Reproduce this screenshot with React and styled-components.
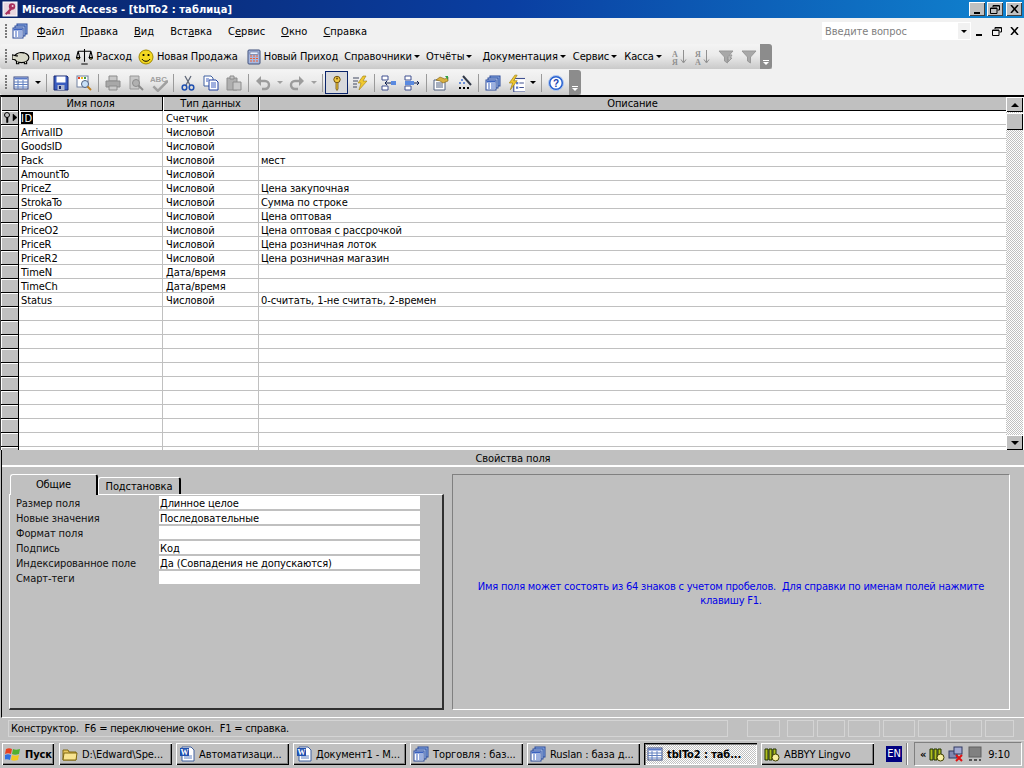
import React from 'react';
import styled, { createGlobalStyle } from 'styled-components';

const GlobalStyle = createGlobalStyle`
  html, body {
    margin: 0;
    padding: 0;
    background: #c0c0c0;
  }
  * {
    box-sizing: border-box;
  }
  body {
    font-family: "DejaVu Sans Condensed", "DejaVu Sans", "Liberation Sans", sans-serif;
    font-stretch: condensed;
    font-size: 11px;
    letter-spacing: -0.1px;
    color: #000;
  }
`;

const Svg = ({ size = 16, children }) => (
  <svg width={size} height={size} viewBox="0 0 16 16" style={{ flex: 'none', display: 'block' }}>
    {children}
  </svg>
);

const AccessLogo = () => (
  <Svg>
    <rect x="1" y="1" width="14" height="14" fill="#e8d8e0" stroke="#fff" />
    <circle cx="10" cy="5.5" r="3.2" fill="#a8305c" />
    <path d="M8 7.5 3 12.5 4.5 14 6 12.5 7 13.5 8.5 12 7.5 11 10 8.5z" fill="#a8305c" />
    <circle cx="10.6" cy="5" r="1" fill="#f0d0e0" />
  </Svg>
);

const DbIcon = () => (
  <Svg>
    <rect x="5" y="1" width="10" height="10" fill="#8fb0e8" stroke="#2a4a9a" />
    <rect x="3" y="3" width="10" height="10" fill="#b8cdf0" stroke="#2a4a9a" />
    <rect x="1" y="5" width="10" height="10" fill="#fff" stroke="#2a4a9a" />
    <path d="M1.5 5.5h9v2h-9z" fill="#3a62c0" />
    <path d="M3 9h2M6 9h4M3 11h2M6 11h4M3 13h2M6 13h4" stroke="#3a62c0" />
  </Svg>
);

// snout points left, as in the reference
const Pig = () => (
  <Svg size={18}>
    <g transform="matrix(-1 0 0 1 17 0)">
      <ellipse cx="8.5" cy="8.5" rx="6.5" ry="4.5" fill="#d8d8c8" stroke="#000" />
      <path d="M13 7l4-1v4l-3 0.5M4 12v2h2v-1.5M11 12.5V14h2v-2.5M6 4.5l4-0.5" fill="#d8d8c8" stroke="#000" />
      <circle cx="12.5" cy="7" r="0.7" />
    </g>
  </Svg>
);

const Scales = () => (
  <Svg size={17}>
    <path d="M8 1v12M2 3h12M5 15h6" stroke="#000" fill="none" />
    <path d="M2 3 0.5 9h3zM14 3l-1.5 6h3z" stroke="#000" fill="none" />
    <path d="M0.5 9a1.5 1.5 0 0 0 3 0zM12.5 9a1.5 1.5 0 0 0 3 0z" fill="#e8d050" stroke="#000" />
  </Svg>
);

const Smile = () => (
  <Svg>
    <circle cx="8" cy="8" r="7" fill="#f4d820" stroke="#a08800" />
    <circle cx="5.5" cy="6" r="1.1" fill="#000" />
    <circle cx="10.5" cy="6" r="1.1" fill="#000" />
    <path d="M4 10c1.5 3 6.500 3 8 0" fill="none" stroke="#000" />
  </Svg>
);

const Calc = () => (
  <Svg>
    <rect x="2" y="1" width="12" height="14" rx="1" fill="#a8b8e0" stroke="#40507a" />
    <rect x="4" y="3" width="8" height="2.500" fill="#e8f0ff" stroke="#40507a" strokeWidth="0.5" />
    <path d="M4 7h2M7 7h2M10 7h2M4 9.500h2M7 9.500h2M10 9.500h2M4 12h2M7 12h2M10 12h2" stroke="#f06030" strokeWidth="1.2" />
  </Svg>
);

const SortIcon = ({ up }) => (
  <Svg>
    <text x="0" y="7.500" fontSize="8" fontWeight="bold" fill="#909090" fontFamily="Liberation Serif, serif">{up ? 'А' : 'Я'}</text>
    <text x="0" y="15.500" fontSize="8" fontWeight="bold" fill="#909090" fontFamily="Liberation Serif, serif">{up ? 'Я' : 'А'}</text>
    <path d="M11.500 1v12M9 10.500 11.500 14l2.500-3.500" fill="none" stroke="#909090" />
  </Svg>
);

const Funnel = ({ bolt }) => (
  <Svg>
    <path d="M1 2h14L9.500 8v6l-3-2V8z" fill="#a8a8a8" stroke="#989898" />
    {bolt && <path d="M12 6l-3 4h2l-2 4 5-5h-2l2-3z" fill="#c0c0c0" stroke="#989898" />}
  </Svg>
);

const GridIcon = () => (
  <Svg>
    <rect x="1" y="2" width="14" height="12" fill="#fff" stroke="#3a4a80" />
    <path d="M1.500 2.500h13v2h-13z" fill="#5a7ac8" />
    <path d="M1 7h14M1 9.500h14M1 12h14M5 5v9M10 5v9" stroke="#6080c0" />
  </Svg>
);

const Disk = () => (
  <Svg>
    <path d="M1 1h13l1 1v13H1z" fill="#3a5cc0" stroke="#1a2a70" />
    <rect x="3.500" y="1.500" width="9" height="6" fill="#fff" />
    <rect x="4.500" y="10" width="7" height="5" fill="#b0b8d0" />
    <rect x="6" y="11" width="2" height="3" fill="#1a2a70" />
  </Svg>
);

const PreviewTable = () => (
  <Svg>
    <rect x="1" y="1" width="11" height="11" fill="#fff" stroke="#7080a0" />
    <path d="M2 2h2v2H2z" fill="#e84020" />
    <path d="M5 2h2v2H5z" fill="#f0c020" />
    <path d="M8 2h2v2H8z" fill="#40a040" />
    <circle cx="9" cy="9" r="3.500" fill="#c8e0f8" stroke="#506080" />
    <path d="M11.500 11.500 15 15" stroke="#c08020" strokeWidth="2" />
  </Svg>
);

const PrintOff = () => (
  <Svg>
    <path d="M4 1h8v5H4z" fill="#c8c8c8" stroke="#8c8c8c" />
    <path d="M1 6h14v6H1z" fill="#a8a8a8" stroke="#8c8c8c" />
    <path d="M4 11h8v4H4z" fill="#c8c8c8" stroke="#8c8c8c" />
  </Svg>
);

const PreviewOff = () => (
  <Svg>
    <path d="M2 1h9v13H2z" fill="#c8c8c8" stroke="#989898" />
    <circle cx="8" cy="8" r="3.500" fill="#b0b0b0" stroke="#8c8c8c" />
    <path d="M10.500 10.500 15 15" stroke="#8c8c8c" strokeWidth="2" />
  </Svg>
);

const SpellOff = () => (
  <Svg size={18}>
    <text x="0" y="7" fontSize="7" fontWeight="bold" fill="#a0a0a0" fontFamily="Liberation Sans, sans-serif">ABC</text>
    <path d="M3 11l4 4 9-9" fill="none" stroke="#a0a0a0" strokeWidth="2.200" />
  </Svg>
);

const Cut = () => (
  <Svg>
    <path d="M5 1l5 9M11 1 6 10" stroke="#606878" strokeWidth="1.300" />
    <ellipse cx="4.500" cy="12.500" rx="2.300" ry="2.500" fill="none" stroke="#2050b0" strokeWidth="1.500" />
    <ellipse cx="11.500" cy="12.500" rx="2.300" ry="2.500" fill="none" stroke="#2050b0" strokeWidth="1.500" />
  </Svg>
);

const Copy = () => (
  <Svg>
    <path d="M1 1h7l2 2v8H1z" fill="#fff" stroke="#4060a0" />
    <path d="M6 5h7l2 2v8H6z" fill="#fff" stroke="#2040a0" />
    <path d="M8 8h5M8 10h5M8 12h5M3 4h3M3 6h2" stroke="#4060c0" />
  </Svg>
);

const PasteOff = () => (
  <Svg>
    <path d="M1 3h10v12H1z" fill="#b0b0b0" stroke="#8c8c8c" />
    <path d="M4 1h4v3H4z" fill="#c8c8c8" stroke="#8c8c8c" />
    <path d="M7 7h8v8H7z" fill="#c8c8c8" stroke="#8c8c8c" />
  </Svg>
);

const Undo = ({ flip }) => (
  <Svg>
    <g transform={flip ? 'matrix(-1 0 0 1 16 0)' : undefined}>
      <path d="M5 6h5a3.500 3.500 0 0 1 0 8H7" fill="none" stroke="#9c9c9c" strokeWidth="2.400" />
      <path d="M6 1v10L1 6z" fill="#9c9c9c" />
    </g>
  </Svg>
);

const Key = () => (
  <Svg>
    <circle cx="8" cy="4.500" r="3.200" fill="#f0c840" stroke="#705010" />
    <circle cx="8" cy="3.500" r="1" fill="#705010" />
    <path d="M7 7.500h2V14l-1 1.500L7 14z" fill="#f0c840" stroke="#705010" strokeWidth="0.800" />
  </Svg>
);

const Bolt = () => (
  <Svg>
    <path d="M1 3h6M1 6h5M1 9h4M1 12h4" stroke="#404860" />
    <path d="M11 1 6 8h3l-2 7 8-9h-4l3-5z" fill="#f0c830" stroke="#a08010" strokeWidth="0.600" />
  </Svg>
);

const RowsIcon = ({ del }) => (
  <Svg>
    <path d="M1 1h6v4H1zM1 11h6v4H1z" fill="#fff" stroke="#405090" />
    {del ? (
      <>
        <path d="M1 6h9v4H1z" fill="#5a8ae0" />
        <path d="M10 8h5M13 6l2 2-2 2" fill="none" stroke="#102050" />
      </>
    ) : (
      <>
        <path d="M10 6h5v4h-5z" fill="#5a8ae0" />
        <path d="M10 8H4M6 6 4 8l2 2" fill="none" stroke="#102050" />
      </>
    )}
  </Svg>
);

const PropsIcon = () => (
  <Svg>
    <path d="M1 5h11v10H1z" fill="#fff" stroke="#506080" />
    <path d="M3 8h7M3 10h7M3 12h7" stroke="#506080" />
    <path d="M3 5l4-3 5 2 3-2v4l-5 2-3-2z" fill="#d8b040" stroke="#806010" strokeWidth="0.600" />
    <path d="M12 1h3v4z" fill="#30a040" />
  </Svg>
);

const BuildIcon = () => (
  <Svg>
    <path d="M7 1 15 10" stroke="#303848" strokeWidth="2" />
    <path d="M5 5h2M3 8h2M7 8h2" stroke="#4070d0" strokeWidth="1.400" />
    <path d="M3 13h2M7 13h2M11 13h2" stroke="#000" strokeWidth="2" />
  </Svg>
);

const NewObject = () => (
  <Svg size={18}>
    <rect x="6" y="4" width="11" height="12" fill="#fff" stroke="#405090" />
    <path d="M8 7h2v2H8zM8 11h2v2H8z" fill="#5a7ac8" />
    <path d="M11 8h4M11 12h4" stroke="#405090" />
    <path d="M7 1 2 8h3l-2 6 6-8H6l3-5z" fill="#f0c830" stroke="#a08010" strokeWidth="0.600" />
  </Svg>
);

const Help = () => (
  <Svg>
    <circle cx="8" cy="8" r="7.500" fill="#2a62d0" stroke="#b0c8f0" />
    <circle cx="8" cy="8" r="5.500" fill="#fff" />
    <text x="8" y="11.500" fontSize="10" fontWeight="bold" fill="#1840b0" textAnchor="middle" fontFamily="Liberation Sans, sans-serif">?</text>
  </Svg>
);

const WinFlag = () => (
  <Svg>
    <path d="M1 3c2-1 4-1 6 0l-1 5c-2-1-4-1-6 0z" fill="#e84020" />
    <path d="M8 3c2 1 4 1 7 0l-1 5c-3 1-5 1-7 0z" fill="#50b030" />
    <path d="M0 9c2-1 4-1 6 0l-1 5c-2-1-4-1-6 0z" fill="#3070e0" />
    <path d="M7 9c2 1 4 1 7 0l-1 5c-3 1-5 1-7 0z" fill="#f0c820" />
  </Svg>
);

const Folder = () => (
  <Svg>
    <path d="M1 4h5l1 2h7v8H1z" fill="#e8c860" stroke="#806810" />
    <path d="M2 7h13l-1 7H1z" fill="#f8e490" stroke="#806810" />
  </Svg>
);

const WordDoc = () => (
  <Svg>
    <path d="M3 1h9l3 3v11H3z" fill="#fff" stroke="#4060a0" />
    <path d="M5 10h8M5 12h8" stroke="#6080c0" />
    <rect x="1" y="2" width="9" height="8" fill="#2050b0" />
    <text x="5.500" y="9" fontSize="8" fontWeight="bold" fill="#fff" textAnchor="middle" fontFamily="Liberation Serif, serif">W</text>
  </Svg>
);

const Lingvo = () => (
  <Svg>
    <path d="M1 3h3v11H1zM5 3h3v11H5zM9 3h3v8H9z" fill="#b0c020" stroke="#203000" />
    <circle cx="11.500" cy="11.500" r="3.500" fill="#f8f0a0" stroke="#404000" />
  </Svg>
);

const Network = () => (
  <Svg>
    <rect x="1" y="5" width="8" height="7" fill="#8088b0" stroke="#303860" />
    <rect x="6" y="1" width="8" height="7" fill="#a0a8d0" stroke="#303860" />
    <path d="M8 9l6 6M14 9l-6 6" stroke="#e01010" strokeWidth="2" />
  </Svg>
);

const Monitor = () => (
  <Svg>
    <rect x="2" y="1" width="12" height="10" fill="#808080" stroke="#606060" />
    <path d="M2 14h3M7 14h3M12 14h2" stroke="#303030" strokeWidth="1.500" />
  </Svg>
);

const Page = styled.div`
  width: 1024px;
  height: 768px;
  display: flex;
  flex-direction: column;
  overflow: hidden;
  background: #c0c0c0;
`;

const TitleBar = styled.div`
  height: 18px;
  flex: none;
  display: flex;
  align-items: center;
  padding: 0 2px;
  gap: 2px;
  background: linear-gradient(90deg, #0a246a 0%, #0a3fa2 50%, #1084d0 100%);
  color: #fff;
`;

const TitleText = styled.span`
  flex: 1;
  padding-left: 2px;
  font-weight: bold;
  font-size: 11px;
  letter-spacing: 0.1px;
  white-space: nowrap;
`;

const CaptionButton = styled.div`
  width: 16px;
  height: 14px;
  margin-left: ${(p) => p.$gap || 0}px;
  display: flex;
  align-items: center;
  justify-content: center;
  background: #c0c0c0;
  box-shadow: inset 1px 1px 0 #fff, inset -1px -1px 0 #404040;
`;

const Dock = styled.div`
  flex: none;
  height: 77px;
  background: #f1f1f1;
  display: flex;
  flex-direction: column;
`;

const MenuRow = styled.div`
  height: 26px;
  display: flex;
  align-items: center;
  padding-left: 5px;
  flex: none;
`;

const Grip = styled.div`
  width: 3px;
  height: 15px;
  margin-right: ${(p) => p.$after}px;
  flex: none;
  background-image: radial-gradient(circle at 1px 1px, #7a7a7a 1px, transparent 1.2px);
  background-size: 3px 3px;
`;

const MenuList = styled.div`
  display: flex;
  gap: 16px;
  margin-left: 9px;
  flex: 1;
  font-size: 11px;
  letter-spacing: 0;

  u {
    text-underline-offset: 1px;
  }
`;

const AskBox = styled.div`
  width: 149px;
  height: 18px;
  background: #fff;
  display: flex;
  align-items: center;
  justify-content: space-between;
  padding-left: 3px;
  color: #808080;
`;

const AskArrow = styled.div`
  width: 12px;
  height: 16px;
  background: #f1f1f1;
  display: flex;
  align-items: center;
  justify-content: center;
  margin-right: 1px;
`;

const DocButtons = styled.div`
  width: 53px;
  display: flex;
  justify-content: space-around;
  padding-right: 1px;
`;

const Toolbar = styled.div`
  height: 25px;
  width: ${(p) => p.$width}px;
  margin-bottom: 1px;
  flex: none;
  display: flex;
  align-items: center;
  padding-left: 5px;
  border-radius: 3px 0 0 3px;
  background: linear-gradient(180deg, #f4f4f4 0%, #ebebeb 45%, #c9c9c9 100%);
`;

const ToolbarEnd = styled.div`
  margin-left: auto;
  width: 12px;
  height: 25px;
  flex: none;
  border-radius: 0 3px 3px 0;
  background: #8c8c8c;
  display: flex;
  flex-direction: column;
  align-items: center;
  justify-content: flex-end;
  padding-bottom: 4px;
  gap: 1px;

  &::before {
    content: '';
    width: 6px;
    height: 1px;
    background: #fff;
  }
  &::after {
    content: '';
    width: 0;
    height: 0;
    border: 3px solid transparent;
    border-top-color: #fff;
    border-bottom: 0;
  }
`;

const TextTool = styled.div`
  display: flex;
  align-items: center;
  flex: none;
  gap: ${(p) => p.$gap ?? 2}px;
  margin-left: ${(p) => p.$left || 0}px;
  white-space: nowrap;
`;

const Caret = styled.i`
  display: block;
  flex: none;
  width: 0;
  height: 0;
  border: 3px solid transparent;
  border-top: 3px solid ${(p) => p.$color || '#000'};
  border-bottom: 0;
`;

const ToolButton = styled.div`
  width: 23px;
  height: 23px;
  flex: none;
  display: flex;
  align-items: center;
  justify-content: center;
  ${(p) => p.$active && 'background: #d8d9dc; border: 1px solid #0a246a;'}
`;

const ToolCaret = styled.div`
  width: 11px;
  height: 23px;
  flex: none;
  display: flex;
  align-items: center;
  justify-content: center;
`;

const ToolSep = styled.div`
  width: 6px;
  height: 18px;
  flex: none;
  display: flex;
  justify-content: center;

  &::after {
    content: '';
    width: 1px;
    background: #9a9a9a;
  }
`;

const Table = styled.div`
  flex: none;
  height: 355px;
  display: flex;
  border-top: 2px solid #000;
  border-left: 1px solid #404040;
  background: #fff;
`;

const TableBody = styled.div`
  flex: 1;
  min-width: 0;
  overflow: hidden;
`;

const Row = styled.div`
  display: grid;
  grid-template-columns: 18px 144px 96px 1fr;
  height: 14px;
`;

const HeaderRow = styled(Row)`
  background: #c0c0c0;
  border-bottom: 1px solid #000;
`;

const HeadCell = styled.div`
  text-align: center;
  line-height: 14px;
  border-right: 1px solid #000;
  box-shadow: inset 1px 0 0 #fff;

  &:last-child {
    border-right: 0;
  }
`;

const Selector = styled.div`
  background: #c0c0c0;
  border-right: 1px solid #000;
  border-bottom: 1px solid #000;
  box-shadow: inset 1px 1px 0 #fff;
  display: flex;
  align-items: center;
  padding-left: 2px;
`;

const Cell = styled.div`
  border-right: 1px solid #c0c0c0;
  border-bottom: 1px solid #c0c0c0;
  padding-left: ${(p) => p.$pad ?? 2}px;
  line-height: 15px;
  white-space: nowrap;
  overflow: hidden;

  &:last-child {
    border-right: 0;
  }
`;

const Picked = styled.span`
  background: #000;
  color: #fff;
  letter-spacing: 0.5px;
`;

const ScrollBar = styled.div`
  width: 17px;
  margin-right: 1px;
  flex: none;
  display: flex;
  flex-direction: column;
  background-color: #fff;
  background-image: conic-gradient(#c0c0c0 25%, #fff 0 50%, #c0c0c0 0 75%, #fff 0);
  background-size: 2px 2px;
`;

const ScrollButton = styled.div`
  height: ${(p) => p.$h}px;
  flex: none;
  display: flex;
  align-items: center;
  justify-content: center;
  background: #c0c0c0;
  box-shadow: inset 1px 1px 0 #fff, inset -1px -1px 0 #000;
  margin-top: ${(p) => (p.$end ? 'auto' : `${p.$top || 0}px`)};
`;

const Arrow = styled.i`
  display: block;
  width: 0;
  height: 0;
  border-left: 4px solid transparent;
  border-right: 4px solid transparent;
  border-${(p) => (p.$up ? 'bottom' : 'top')}: 4px solid #000;
`;

const PropsPane = styled.div`
  flex: none;
  height: 268px;
  margin-left: 1px;
  border-left: 1px solid #000;
  border-bottom: 1px solid #fff;
  display: flex;
  flex-direction: column;
`;

const PropsCaption = styled.div`
  height: 17px;
  flex: none;
  text-align: center;
  line-height: 17px;
  border-bottom: 2px solid;
  border-image: linear-gradient(#808080 50%, #fff 50%) 2;
`;

const PropsBody = styled.div`
  flex: 1;
  display: flex;
  gap: 8px;
  padding: 7px 14px 7px 7px;
`;

const TabColumn = styled.div`
  width: 435px;
  display: flex;
  flex-direction: column;
`;

const Tabs = styled.div`
  display: flex;
  align-items: flex-end;
  height: 20px;
  padding-left: 1px;
  flex: none;
`;

const Tab = styled.div`
  width: ${(p) => p.$w}px;
  height: ${(p) => (p.$active ? 21 : 17)}px;
  margin-bottom: ${(p) => (p.$active ? -1 : 0)}px;
  position: relative;
  background: #c0c0c0;
  border-top: 1px solid #fff;
  border-left: 1px solid #fff;
  border-right: 2px solid #000;
  border-radius: 3px 3px 0 0;
  text-align: center;
  line-height: ${(p) => (p.$active ? 19 : 18)}px;
`;

const TabPanel = styled.div`
  flex: 1;
  border-top: 1px solid #fff;
  border-left: 1px solid #fff;
  border-right: 2px solid #303030;
  border-bottom: 2px solid #303030;
  padding: 1px 22px 0 6px;
  display: grid;
  grid-template-columns: 143px 1fr;
  grid-auto-rows: 13px;
  row-gap: 2px;
`;

const FieldLabel = styled.div`
  line-height: 15px;
  color: #101010;
`;

const FieldValue = styled.div`
  background: #fff;
  line-height: 15px;
  padding-left: 1px;
  white-space: nowrap;
`;

const HintPanel = styled.div`
  flex: 1;
  border: 1px solid;
  border-color: #808080 #fff #fff #808080;
  display: flex;
  align-items: center;
  justify-content: center;
  padding: 4px 10px 0;
  text-align: center;
  white-space: pre-wrap;
  letter-spacing: -0.2px;
  color: #0000e8;
  line-height: 14px;
`;

const StatusBar = styled.div`
  flex: none;
  height: 22px;
  display: flex;
  gap: 3px;
  padding: 2px 8px 3px 8px;
`;

const StatusCell = styled.div`
  width: ${(p) => p.$w}px;
  margin-right: ${(p) => p.$after || 0}px;
  border: 1px solid #d4d4d4;
  padding-left: 2px;
  line-height: 15px;
  white-space: pre;
  letter-spacing: -0.2px;
`;

const TaskBar = styled.div`
  flex: 1;
  display: flex;
  align-items: center;
  padding: 1px 2px 3px 2px;
  gap: 4px;
  border-top: 1px solid #d8d8d8;
`;

const TaskButton = styled.div`
  width: ${(p) => p.$w || 113}px;
  height: 22px;
  flex: none;
  margin-right: ${(p) => p.$after || 0}px;
  display: flex;
  align-items: center;
  gap: 4px;
  padding-left: 3px;
  white-space: nowrap;
  overflow: hidden;
  background-color: #c0c0c0;
  box-shadow: inset 1px 1px 0 #fff, inset -1px -1px 0 #000, inset -2px -2px 0 #808080;
  ${(p) =>
    p.$active &&
    `
    font-weight: bold;
    background-color: #fff;
    background-image: conic-gradient(#c0c0c0 25%, #fff 0 50%, #c0c0c0 0 75%, #fff 0);
    background-size: 2px 2px;
    box-shadow: inset 1px 1px 0 #000, inset 2px 2px 0 #808080, inset -1px -1px 0 #fff;
  `}
`;

const StartLabel = styled.b`
  font-size: 11px;
  font-family: "DejaVu Sans", sans-serif;
`;

const LangBadge = styled.div`
  width: 16px;
  height: 16px;
  margin-left: 8px;
  flex: none;
  background: #000080;
  color: #fff;
  font-size: 11px;
  line-height: 16px;
  text-align: center;
`;

const TrayDivider = styled.div`
  width: 2px;
  height: 22px;
  flex: none;
  border-left: 1px solid #808080;
  border-right: 1px solid #fff;
`;

const Tray = styled.div`
  flex: 1;
  height: 24px;
  margin-left: 2px;
  display: flex;
  align-items: center;
  gap: 3px;
  padding-left: 5px;
  border: 1px solid;
  border-color: #808080 #fff #fff #808080;
`;

const Clock = styled.span`
  margin-left: auto;
  margin-right: 11px;
`;

const rows = [
  ['ArrivalID', 'Числовой', ''],
  ['GoodsID', 'Числовой', ''],
  ['Pack', 'Числовой', 'мест'],
  ['AmountTo', 'Числовой', ''],
  ['PriceZ', 'Числовой', 'Цена закупочная'],
  ['StrokaTo', 'Числовой', 'Сумма по строке'],
  ['PriceO', 'Числовой', 'Цена оптовая'],
  ['PriceO2', 'Числовой', 'Цена оптовая с рассрочкой'],
  ['PriceR', 'Числовой', 'Цена розничная лоток'],
  ['PriceR2', 'Числовой', 'Цена розничная магазин'],
  ['TimeN', 'Дата/время', ''],
  ['TimeCh', 'Дата/время', ''],
  ['Status', 'Числовой', '0-считать, 1-не считать, 2-времен'],
  ...Array.from({ length: 11 }, () => ['', '', '']),
];

const fields = [
  ['Размер поля', 'Длинное целое'],
  ['Новые значения', 'Последовательные'],
  ['Формат поля', ''],
  ['Подпись', 'Код'],
  ['Индексированное поле', 'Да (Совпадения не допускаются)'],
  ['Смарт-теги', ''],
];

const CloseGlyph = () => (
  <svg width="9" height="8" viewBox="0 0 9 8">
    <path d="M1 0l7 8M8 0 1 8" stroke="#000" strokeWidth="1.500" fill="none" />
  </svg>
);

const MinGlyph = () => (
  <svg width="9" height="9" viewBox="0 0 9 9">
    <path d="M1 7h6v2H1z" fill="#000" />
  </svg>
);

const RestoreGlyph = () => (
  <svg width="10" height="9" viewBox="0 0 10 9">
    <path d="M3 2V0.500h6.500V5H7.500M0.500 3h6.500v5.500H0.500z" fill="none" stroke="#000" />
    <path d="M3 1h6M0.500 3.500h6.500" stroke="#000" />
  </svg>
);

const App = () => (
  <Page>
    <GlobalStyle />
    <TitleBar>
      <AccessLogo />
      <TitleText>Microsoft Access - [tblTo2 : таблица]</TitleText>
      <CaptionButton><MinGlyph /></CaptionButton>
      <CaptionButton><RestoreGlyph /></CaptionButton>
      <CaptionButton $gap={1}><CloseGlyph /></CaptionButton>
    </TitleBar>

    <Dock>
      <MenuRow>
        <Grip $after={4} />
        <DbIcon />
        <MenuList>
          <span><u>Ф</u>айл</span>
          <span><u>П</u>равка</span>
          <span><u>В</u>ид</span>
          <span>Вст<u>а</u>вка</span>
          <span>С<u>е</u>рвис</span>
          <span><u>О</u>кно</span>
          <span><u>С</u>правка</span>
        </MenuList>
        <AskBox>
          Введите вопрос
          <AskArrow><Caret /></AskArrow>
        </AskBox>
        <DocButtons>
          <MinGlyph />
          <RestoreGlyph />
          <CloseGlyph />
        </DocButtons>
      </MenuRow>

      <Toolbar $width={772}>
        <Grip $after={4} />
        <TextTool><Pig />Приход</TextTool>
        <TextTool $left={6} $gap={3}><Scales />Расход</TextTool>
        <TextTool $left={6} $gap={3}><Smile />Новая Продажа</TextTool>
        <TextTool $left={8}><Calc />Новый Приход</TextTool>
        <TextTool $left={6}>Справочники<Caret /></TextTool>
        <TextTool $left={6}>Отчёты<Caret /></TextTool>
        <TextTool $left={10}>Документация<Caret /></TextTool>
        <TextTool $left={7}>Сервис<Caret /></TextTool>
        <TextTool $left={7}>Касса<Caret /></TextTool>
        <TextTool $left={10} $gap={7}>
          <SortIcon up />
          <SortIcon />
          <Funnel bolt />
          <Funnel />
        </TextTool>
        <ToolbarEnd />
      </Toolbar>

      <Toolbar $width={581}>
        <Grip $after={1} />
        <ToolButton><GridIcon /></ToolButton>
        <ToolCaret><Caret /></ToolCaret>
        <ToolSep />
        <ToolButton><Disk /></ToolButton>
        <ToolButton><PreviewTable /></ToolButton>
        <ToolSep />
        <ToolButton><PrintOff /></ToolButton>
        <ToolButton><PreviewOff /></ToolButton>
        <ToolButton><SpellOff /></ToolButton>
        <ToolSep />
        <ToolButton><Cut /></ToolButton>
        <ToolButton><Copy /></ToolButton>
        <ToolButton><PasteOff /></ToolButton>
        <ToolSep />
        <ToolButton><Undo /></ToolButton>
        <ToolCaret><Caret $color="#a0a0a0" /></ToolCaret>
        <ToolButton><Undo flip /></ToolButton>
        <ToolCaret><Caret $color="#a0a0a0" /></ToolCaret>
        <ToolSep />
        <ToolButton $active><Key /></ToolButton>
        <ToolButton><Bolt /></ToolButton>
        <ToolSep />
        <ToolButton><RowsIcon /></ToolButton>
        <ToolButton><RowsIcon del /></ToolButton>
        <ToolSep />
        <ToolButton><PropsIcon /></ToolButton>
        <ToolButton><BuildIcon /></ToolButton>
        <ToolSep />
        <ToolButton><DbIcon /></ToolButton>
        <ToolButton><NewObject /></ToolButton>
        <ToolCaret><Caret /></ToolCaret>
        <ToolSep />
        <ToolButton><Help /></ToolButton>
        <ToolbarEnd />
      </Toolbar>
    </Dock>

    <Table>
      <TableBody>
        <HeaderRow>
          <HeadCell />
          <HeadCell>Имя поля</HeadCell>
          <HeadCell>Тип данных</HeadCell>
          <HeadCell>Описание</HeadCell>
        </HeaderRow>
        <Row>
          <Selector>
            <svg width="14" height="11" viewBox="0 0 14 11">
              <circle cx="4" cy="3" r="2.500" fill="none" stroke="#000" />
              <path d="M3.500 5.500v5h1.500v-5M10 2v7l4-3.500z" fill="#000" stroke="#000" strokeWidth="0.500" />
            </svg>
          </Selector>
          <Cell><Picked>ID</Picked></Cell>
          <Cell $pad={3}>Счетчик</Cell>
          <Cell />
        </Row>
        {rows.map(([name, type, note], i) => (
          <Row key={i}>
            <Selector />
            <Cell>{name}</Cell>
            <Cell $pad={3}>{type}</Cell>
            <Cell>{note}</Cell>
          </Row>
        ))}
      </TableBody>
      <ScrollBar>
        <ScrollButton $h={15}><Arrow $up /></ScrollButton>
        <ScrollButton $h={17} $top={1} />
        <ScrollButton $h={15} $end><Arrow /></ScrollButton>
      </ScrollBar>
    </Table>

    <PropsPane>
      <PropsCaption>Свойства поля</PropsCaption>
      <PropsBody>
        <TabColumn>
          <Tabs>
            <Tab $w={88} $active>Общие</Tab>
            <Tab $w={83}>Подстановка</Tab>
          </Tabs>
          <TabPanel>
            {fields.map(([label, value]) => (
              <React.Fragment key={label}>
                <FieldLabel>{label}</FieldLabel>
                <FieldValue>{value}</FieldValue>
              </React.Fragment>
            ))}
          </TabPanel>
        </TabColumn>
        <HintPanel>
          {'Имя поля может состоять из 64 знаков с учетом пробелов.  Для справки по именам полей нажмите клавишу F1.'}
        </HintPanel>
      </PropsBody>
    </PropsPane>

    <StatusBar>
      <StatusCell $w={720} $after={16}>{'Конструктор.  F6 = переключение окон.  F1 = справка.'}</StatusCell>
      <StatusCell $w={33} $after={4} />
      <StatusCell $w={27} />
      <StatusCell $w={28} />
      <StatusCell $w={32} />
      <StatusCell $w={32} />
      <StatusCell $w={29} />
      <StatusCell $w={32} />
      <StatusCell $w={29} />
    </StatusBar>

    <TaskBar>
      <TaskButton $w={52} $after={1}><WinFlag /><StartLabel>Пуск</StartLabel></TaskButton>
      <TaskButton><Folder />D:\Edward\Spe...</TaskButton>
      <TaskButton><WordDoc />Автоматизаци...</TaskButton>
      <TaskButton><WordDoc />Документ1 - М...</TaskButton>
      <TaskButton><DbIcon />Торговля : баз...</TaskButton>
      <TaskButton><DbIcon />Ruslan : база д...</TaskButton>
      <TaskButton $active><GridIcon />tblTo2 : таб...</TaskButton>
      <TaskButton><Lingvo />ABBYY Lingvo</TaskButton>
      <LangBadge>EN</LangBadge>
      <TrayDivider />
      <Tray>
        <b>«</b>
        <Lingvo />
        <Network />
        <Monitor />
        <Clock>9:10</Clock>
      </Tray>
    </TaskBar>
  </Page>
);

export default App;
